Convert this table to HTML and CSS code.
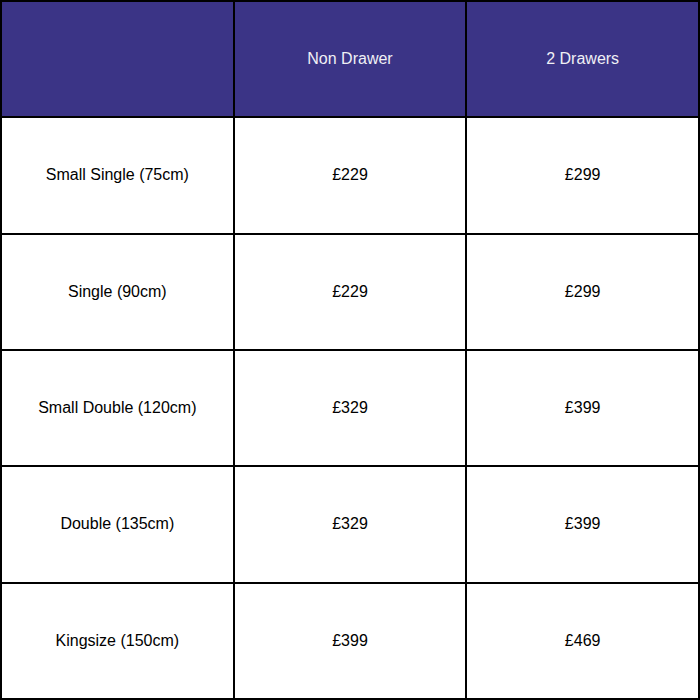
FILE: index.html
```html
<!DOCTYPE html>
<html>
<head>
<meta charset="utf-8">
<link rel="stylesheet" href="styles.css">
</head>
<body>
<table class="price-table">
  <thead>
    <tr><th></th><th>Non Drawer</th><th>2 Drawers</th></tr>
  </thead>
  <tbody>
    <tr><td>Small Single (75cm)</td><td>£229</td><td>£299</td></tr>
    <tr><td>Single (90cm)</td><td>£229</td><td>£299</td></tr>
    <tr><td>Small Double (120cm)</td><td>£329</td><td>£399</td></tr>
    <tr><td>Double (135cm)</td><td>£329</td><td>£399</td></tr>
    <tr><td>Kingsize (150cm)</td><td>£399</td><td>£469</td></tr>
  </tbody>
</table>
</body>
</html>
```
FILE: styles.css
```css
html, body {
  margin: 0;
  padding: 0;
  background: #fff;
}
.price-table {
  width: 700px;
  height: 700px;
  border-collapse: collapse;
  table-layout: fixed;
  font-family: "Liberation Sans", Arial, sans-serif;
  font-size: 16px;
  color: #000;
}
.price-table tr {
  height: 116.3333px;
}
.price-table th,
.price-table td {
  border: 2px solid #000;
  text-align: center;
  vertical-align: middle;
  padding: 0;
}
.price-table th {
  background: #3b3486;
  color: #f0f0f5;
  font-weight: normal;
}
```
